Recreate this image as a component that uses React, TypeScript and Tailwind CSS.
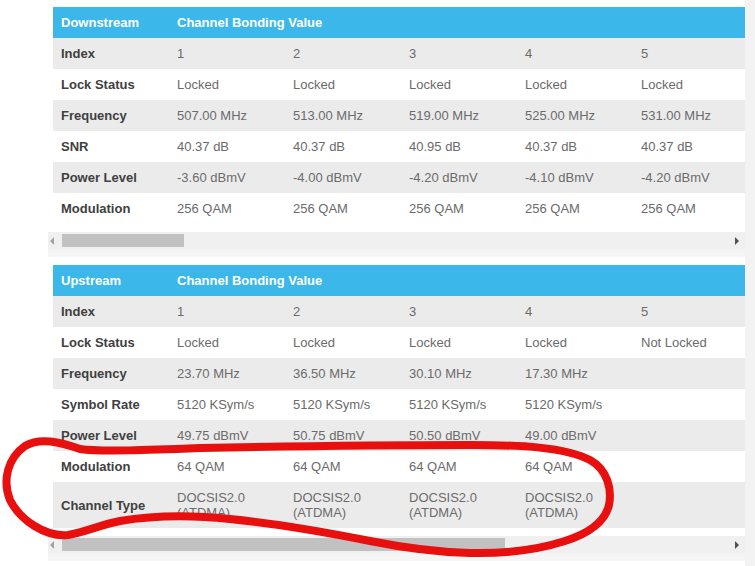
import React from "react";

type Row = { label: string; values: string[]; tall?: boolean };

const downRows: Row[] = [
  { label: "Index", values: ["1", "2", "3", "4", "5"] },
  { label: "Lock Status", values: ["Locked", "Locked", "Locked", "Locked", "Locked"] },
  { label: "Frequency", values: ["507.00 MHz", "513.00 MHz", "519.00 MHz", "525.00 MHz", "531.00 MHz"] },
  { label: "SNR", values: ["40.37 dB", "40.37 dB", "40.95 dB", "40.37 dB", "40.37 dB"] },
  { label: "Power Level", values: ["-3.60 dBmV", "-4.00 dBmV", "-4.20 dBmV", "-4.10 dBmV", "-4.20 dBmV"] },
  { label: "Modulation", values: ["256 QAM", "256 QAM", "256 QAM", "256 QAM", "256 QAM"] },
];

const upRows: Row[] = [
  { label: "Index", values: ["1", "2", "3", "4", "5"] },
  { label: "Lock Status", values: ["Locked", "Locked", "Locked", "Locked", "Not Locked"] },
  { label: "Frequency", values: ["23.70 MHz", "36.50 MHz", "30.10 MHz", "17.30 MHz", ""] },
  { label: "Symbol Rate", values: ["5120 KSym/s", "5120 KSym/s", "5120 KSym/s", "5120 KSym/s", ""] },
  { label: "Power Level", values: ["49.75 dBmV", "50.75 dBmV", "50.50 dBmV", "49.00 dBmV", ""] },
  { label: "Modulation", values: ["64 QAM", "64 QAM", "64 QAM", "64 QAM", ""] },
  {
    label: "Channel Type",
    values: ["DOCSIS2.0 (ATDMA)", "DOCSIS2.0 (ATDMA)", "DOCSIS2.0 (ATDMA)", "DOCSIS2.0 (ATDMA)", ""],
    tall: true,
  },
];

function Scrollbar({ thumb }: { thumb: number }) {
  return (
    <div className="flex flex-col">
      <div className="relative h-[17px] bg-[#f0f0f0]">
        <div className="absolute left-[2px] top-[5px] w-0 h-0 border-y-[4px] border-y-transparent border-r-[4px] border-r-[#a3a3a3]" />
        <div className="absolute top-[2px] h-[13px] left-[14px] bg-[#c1c1c1]" style={{ width: thumb }} />
        <div className="absolute right-[6px] top-[5px] w-0 h-0 border-y-[4px] border-y-transparent border-l-[4px] border-l-[#505050]" />
      </div>
      <div className="h-[8px] bg-[#f5f5f5]" />
    </div>
  );
}

function StatusTable({ title, rows, thumb }: { title: string; rows: Row[]; thumb: number }) {
  return (
    <div className="flex flex-col">
      <div className="overflow-hidden pl-[5px] pb-[8px] bg-white">
        <table className="table-fixed border-collapse w-[696px] text-[13px] leading-[15px]">
          <colgroup>
            <col className="w-[116px]" />
            <col className="w-[116px]" />
            <col className="w-[116px]" />
            <col className="w-[116px]" />
            <col className="w-[116px]" />
            <col className="w-[116px]" />
          </colgroup>
          <thead>
            <tr className="bg-[#3bb7ea] text-white h-[31px]">
              <th className="text-left font-bold px-2 py-2 align-middle">{title}</th>
              <th colSpan={5} className="text-left font-bold px-2 py-2 align-middle">
                Channel Bonding Value
              </th>
            </tr>
          </thead>
          <tbody>
            {rows.map((r, i) => (
              <tr key={r.label} className={i % 2 === 0 ? "bg-[#ebebeb]" : "bg-white"}>
                <td className={`px-2 align-middle font-bold text-[#404040] ${r.tall ? "h-[46px]" : "h-[31px]"}`}>
                  {r.label}
                </td>
                {r.values.map((v, j) => (
                  <td key={j} className="px-2 align-middle text-[#6b6b6b]">
                    {v}
                  </td>
                ))}
              </tr>
            ))}
          </tbody>
        </table>
      </div>
      <Scrollbar thumb={thumb} />
    </div>
  );
}

export default function App() {
  return (
    <div
      className="relative flex w-[755px] h-[566px] bg-white overflow-hidden"
      style={{ fontFamily: '"Liberation Sans", Arial, sans-serif' }}
    >
      <div className="w-[48px] shrink-0" />
      <div className="w-[697px] shrink-0 flex flex-col gap-[8px] pt-[7px]">
        <StatusTable title="Downstream" rows={downRows} thumb={122} />
        <StatusTable title="Upstream" rows={upRows} thumb={443} />
      </div>
      <div className="w-[10px] shrink-0 bg-[#f3f3f3]" />
      <svg className="absolute inset-0 pointer-events-none" width="755" height="566" viewBox="0 0 755 566">
        <path
          d="M 470 445 C 520 445, 565 447, 590 460 C 608 470, 612 490, 609 505 C 605 522, 590 533, 565 541 C 540 549, 510 554, 470 553 C 430 552, 400 547, 370 541 C 330 533, 280 524, 230 519 C 190 515, 150 516, 120 521 C 100 525, 85 532, 68 535 C 45 537, 20 520, 10 500 C 2 480, 8 458, 25 446 C 40 437, 60 442, 80 449 C 100 452, 150 450, 200 448 C 300 446, 400 445, 470 445 Z"
          fill="none"
          stroke="#e8100f"
          strokeWidth="8"
          strokeLinecap="round"
          strokeLinejoin="round"
        />
      </svg>
    </div>
  );
}
